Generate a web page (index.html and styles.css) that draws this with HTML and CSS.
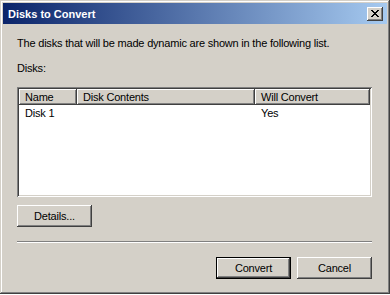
FILE: index.html
```html
<!DOCTYPE html>
<html>
<head>
<meta charset="utf-8">
<link rel="stylesheet" href="styles.css">
</head>
<body>
<div class="win">
  <div class="titlebar">
    <span class="title">Disks to Convert</span>
    <span class="close">
      <svg width="8" height="7" viewBox="0 0 8 7" shape-rendering="crispEdges">
        <path d="M0 0h2v1h-2zM6 0h2v1h-2zM1 1h2v1h-2zM5 1h2v1h-2zM2 2h4v1h-4zM3 3h2v1h-2zM2 4h4v1h-4zM1 5h2v1h-2zM5 5h2v1h-2zM0 6h2v1h-2zM6 6h2v1h-2z" fill="#000"/>
      </svg>
    </span>
  </div>
  <div class="content">
    <p class="intro">The disks that will be made dynamic are shown in the following list.</p>
    <p class="label">Disks:</p>
    <div class="list">
      <div class="header">
        <div class="hcell c1">Name</div>
        <div class="hcell c2">Disk Contents</div>
        <div class="hcell c3">Will Convert</div>
      </div>
      <div class="row">
        <div class="cell c1">Disk 1</div>
        <div class="cell c2"></div>
        <div class="cell c3">Yes</div>
      </div>
    </div>
    <div class="btnrow-left">
      <button class="btn">Details...</button>
    </div>
    <div class="sep"></div>
    <div class="btnrow">
      <button class="btn default">Convert</button>
      <button class="btn">Cancel</button>
    </div>
  </div>
</div>
</body>
</html>
```
FILE: styles.css
```css
html, body {
  margin: 0;
  padding: 0;
  background: #ffffff;
}
body {
  font-family: "Liberation Sans", Arial, sans-serif;
  font-size: 11px;
  letter-spacing: -0.2px;
  color: #000;
}
.win {
  width: 390px;
  height: 294px;
  box-sizing: border-box;
  padding: 3px;
  background: #d4d0c8;
  box-shadow: inset -1px -1px #404040, inset 1px 1px #d4d0c8, inset -2px -2px #808080, inset 2px 2px #ffffff;
  display: flex;
  flex-direction: column;
}
.titlebar {
  height: 21px;
  background: linear-gradient(to right, #0a246a, #a6caf0);
  display: flex;
  align-items: center;
  justify-content: space-between;
  padding: 0 4px 0 5px;
}
.title {
  color: #fff;
  font-weight: bold;
  font-size: 11px;
  letter-spacing: 0;
}
.close {
  width: 16px;
  height: 14px;
  box-sizing: border-box;
  background: #d4d0c8;
  box-shadow: inset -1px -1px #404040, inset 1px 1px #ffffff, inset -2px -2px #808080;
  display: flex;
  align-items: center;
  justify-content: center;
  padding: 0 1px 1px 0;
}
.close svg { display: block; }
.content {
  padding: 12px 15px 0 14px;
  display: flex;
  flex-direction: column;
}
p {
  margin: 0;
  line-height: 14px;
}
.label {
  margin-top: 11px;
}
.list {
  margin-top: 12px;
  height: 110px;
  box-sizing: border-box;
  background: #fff;
  padding: 2px;
  box-shadow: inset 1px 1px #808080, inset -1px -1px #ffffff, inset 2px 2px #404040, inset -2px -2px #d4d0c8;
}
.header, .row {
  display: flex;
}
.c1 { width: 58px; }
.c2 { width: 178px; }
.c3 { flex: 1; }
.hcell {
  height: 16px;
  line-height: 16px;
  box-sizing: border-box;
  padding-left: 6px;
  background: #d4d0c8;
  box-shadow: inset -1px -1px #404040, inset 1px 1px #ffffff, inset -2px -2px #808080;
  white-space: nowrap;
}
.cell {
  height: 16px;
  line-height: 16px;
  padding-left: 6px;
  box-sizing: border-box;
}
.btnrow-left {
  margin-top: 8px;
  display: flex;
}
.btn {
  width: 75px;
  height: 22px;
  box-sizing: border-box;
  border: none;
  padding: 0;
  margin: 0;
  font-family: "Liberation Sans", Arial, sans-serif;
  font-size: 11px;
  letter-spacing: -0.2px;
  color: #000;
  background: #d4d0c8;
  box-shadow: inset -1px -1px #404040, inset 1px 1px #ffffff, inset -2px -2px #808080;
}
.btn.default {
  box-shadow: inset 0 0 0 1px #000, inset -2px -2px #404040, inset 2px 2px #ffffff, inset -3px -3px #808080;
}
.sep {
  margin-top: 14px;
  height: 2px;
  border-top: 1px solid #808080;
  border-bottom: 1px solid #ffffff;
  box-sizing: border-box;
}
.btnrow {
  margin-top: 14px;
  display: flex;
  justify-content: flex-end;
  gap: 6px;
}
```
